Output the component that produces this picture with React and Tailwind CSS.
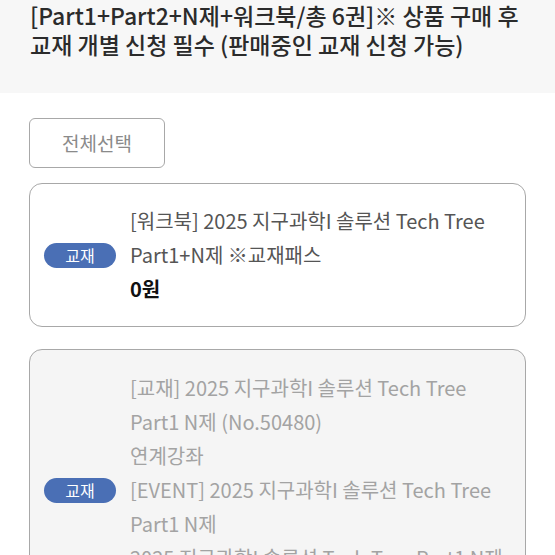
export default function App() {
  const font = { fontFamily: '"Noto Sans CJK KR", "Noto Sans", sans-serif' };
  return (
    <div className="w-[555px] h-[555px] overflow-hidden bg-white" style={font}>
      <div className="bg-[#f7f7f7] h-[93px] pl-[30px] pt-[1px]">
        <p className="text-[23px] leading-[29px] font-medium text-[#2b2b2b] whitespace-nowrap">
          [Part1+Part2+N제+워크북/총 6권]※ 상품 구매 후<br />교재 개별 신청 필수 (판매중인 교재 신청 가능)
        </p>
      </div>
      <div className="px-[29px] pt-[25px]">
        <button className="w-[136px] h-[50px] border border-[#a8a8a8] rounded-[6px] text-[19px] text-[#8a8a8a] bg-white">
          전체선택
        </button>
        <div className="mt-[15px] w-[497px] border border-[#a8a8a8] rounded-[13px] flex items-center py-[20px] pl-[14px]">
          <span className="w-[72px] h-[25px] rounded-full bg-[#4a6fb5] text-white text-[16px] flex items-center justify-center shrink-0">교재</span>
          <div className="ml-[14px] text-[20px] leading-[34px] text-[#555]">
            <div>[워크북] 2025 지구과학I 솔루션 Tech Tree</div>
            <div>Part1+N제 ※교재패스</div>
            <div className="font-bold text-[#111]">0원</div>
          </div>
        </div>
        <div className="mt-[22px] w-[497px] border border-[#a8a8a8] rounded-[13px] bg-[#f5f5f5] flex items-center py-[21px] pl-[14px]">
          <span className="w-[72px] h-[25px] rounded-full bg-[#4a6fb5] text-white text-[16px] flex items-center justify-center shrink-0">교재</span>
          <div className="ml-[14px] text-[20px] leading-[34px] text-[#a3a3a3]">
            <div>[교재] 2025 지구과학I 솔루션 Tech Tree</div>
            <div>Part1 N제 (No.50480)</div>
            <div>연계강좌</div>
            <div>[EVENT] 2025 지구과학I 솔루션 Tech Tree</div>
            <div>Part1 N제</div>
            <div className="whitespace-nowrap">2025 지구과학I 솔루션 Tech Tree Part1 N제</div>
            <div>0원</div>
          </div>
        </div>
      </div>
    </div>
  );
}
